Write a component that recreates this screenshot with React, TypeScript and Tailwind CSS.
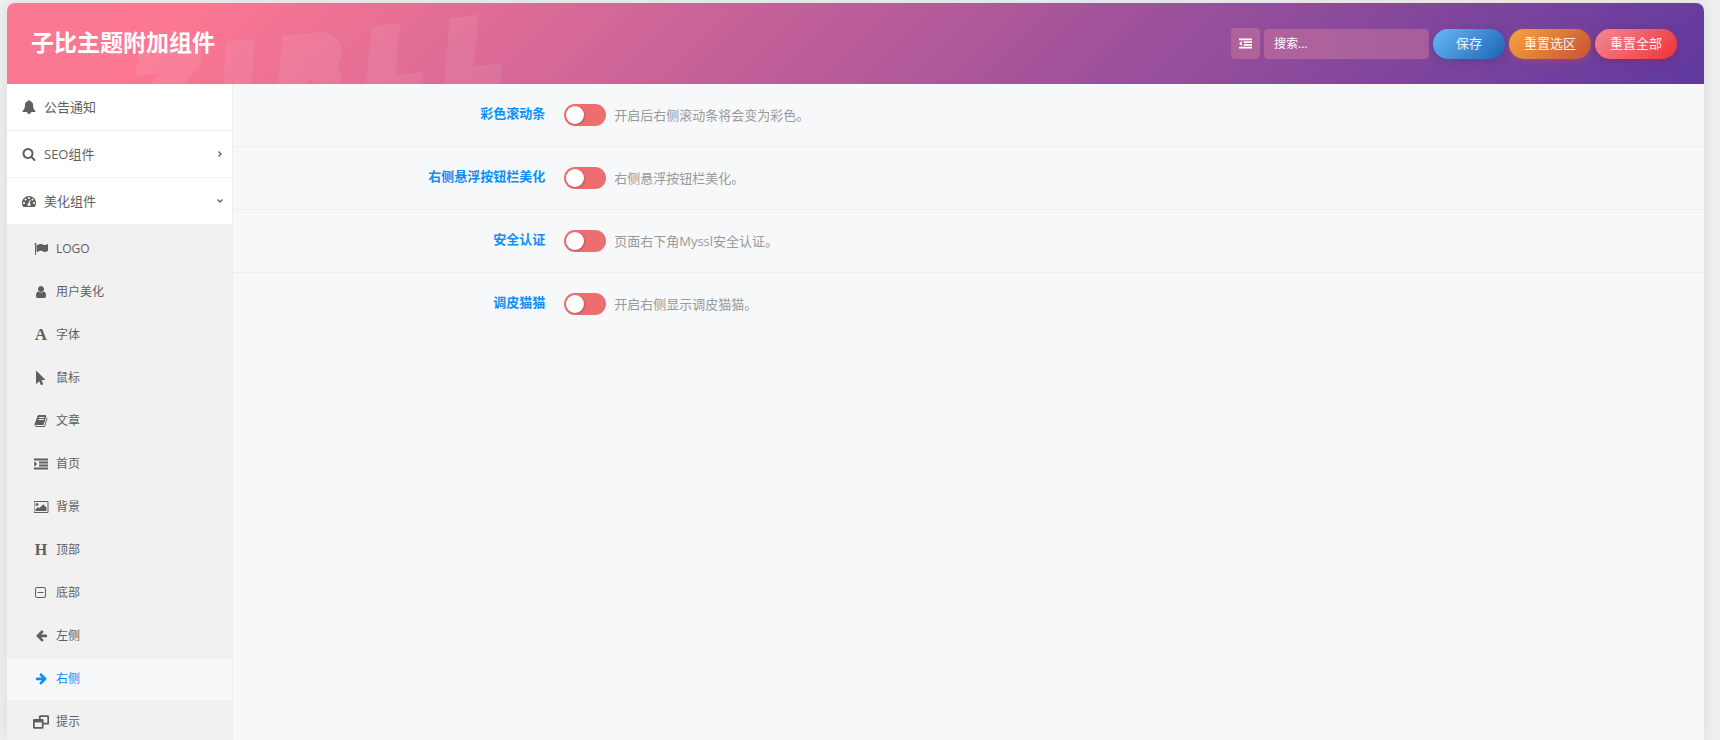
import React from "react";

const PATHS = {
  bell: "M912 1696q0-16-16-16-59 0-101.5-42.5t-42.5-101.5q0-16-16-16t-16 16q0 73 51.5 124.5t124.5 51.5q16 0 16-16zm816-288q0 52-38 90t-90 38h-448q0 106-75 181t-181 75-181-75-75-181h-448q-52 0-90-38t-38-90q50-42 91-88t85-119.5 74.5-158.5 50-206 19.5-260q0-152 117-282.5t307-158.5q-8-19-8-39 0-40 28-68t68-28 68 28 28 68q0 20-8 39 190 28 307 158.5t117 282.5q0 139 19.5 260t50 206 74.5 158.5 85 119.5 91 88z",
  search:
    "M1216 832q0-185-131.5-316.5t-316.5-131.5-316.5 131.5-131.5 316.5 131.5 316.5 316.5 131.5 316.5-131.5 131.5-316.5zm512 832q0 52-38 90t-90 38q-54 0-90-38l-343-342q-179 124-399 124-143 0-273.5-55.5t-225-150-150-225-55.5-273.5 55.5-273.5 150-225 225-150 273.5-55.5 273.5 55.5 225 150 150 225 55.5 273.5q0 220-124 399l343 343q37 37 37 90z",
  dashboard:
    "M384 1152q0-53-37.5-90.5t-90.5-37.5-90.5 37.5-37.5 90.5 37.5 90.5 90.5 37.5 90.5-37.5 37.5-90.5zm192-448q0-53-37.5-90.5t-90.5-37.5-90.5 37.5-37.5 90.5 37.5 90.5 90.5 37.5 90.5-37.5 37.5-90.5zm428 481l101-382q6-26-7.5-48.5t-38.5-29.5-48 6.5-30 39.5l-101 382q-60 5-107 43.5t-63 98.5q-20 77 20 146t117 89 146-20 89-117q16-60-6-117t-72-91zm660-33q0-53-37.5-90.5t-90.5-37.5-90.5 37.5-37.5 90.5 37.5 90.5 90.5 37.5 90.5-37.5 37.5-90.5zm-640-640q0-53-37.5-90.5t-90.5-37.5-90.5 37.5-37.5 90.5 37.5 90.5 90.5 37.5 90.5-37.5 37.5-90.5zm448 192q0-53-37.5-90.5t-90.5-37.5-90.5 37.5-37.5 90.5 37.5 90.5 90.5 37.5 90.5-37.5 37.5-90.5zm320 448q0 261-141 483-19 29-54 29h-1402q-35 0-54-29-141-221-141-483 0-182 71-348t191-286 286-191 348-71 348 71 286 191 191 286 71 348z",
  flag: "M320 256q0 72-64 110v1266q0 13-9.5 22.5t-22.5 9.5h-64q-13 0-22.5-9.5t-9.5-22.5v-1266q-64-38-64-110 0-53 37.5-90.5t90.5-37.5 90.5 37.5 37.5 90.5zm1472 64v763q0 25-12.5 38.5t-39.5 27.5q-215 116-369 116-61 0-123.5-22t-108.5-48-115.5-48-142.5-22q-192 0-464 146-17 9-33 9-26 0-45-19t-19-45v-742q0-32 31-55 21-14 79-43 236-120 421-120 107 0 200 29t219 88q38 19 88 19 54 0 117.5-21t110-47 88-47 54.5-21q26 0 45 19t19 45z",
  user: "M1536 1399q0 109-62.5 187t-150.5 78h-854q-88 0-150.5-78t-62.5-187q0-85 8.5-160.5t31.5-152 58.5-131 94-89 134.5-34.5q131 128 313 128t313-128q76 0 134.5 34.5t94 89 58.5 131 31.5 152 8.5 160.5zm-256-887q0 159-112.5 271.5t-271.5 112.5-271.5-112.5-112.5-271.5 112.5-271.5 271.5-112.5 271.5 112.5 112.5 271.5z",
  pointer:
    "M1389 1043q31 30 14 69-17 40-59 40h-382l201 476q10 25 0 49t-34 35l-177 75q-25 10-49 0t-35-34l-191-452-312 312q-19 19-45 19-12 0-24-5-40-17-40-59v-1504q0-42 40-59 12-5 24-5 27 0 45 19z",
  book: "M1703 478q40 57 18 129l-275 906q-19 64-76.5 107.5t-122.5 43.5h-923q-77 0-148.5-53.5t-99.5-131.5q-24-67-2-127 0-4 3-27t4-37q1-8-3-21.5t-3-19.5q2-11 8-21t16.5-23.5 16.5-23.5q23-38 45-91.5t30-91.5q3-10 .5-30t-.5-28q3-11 17-28t17-23q21-36 42-92t25-90q1-9-2.5-32t.5-28q4-13 22-30.5t22-22.5q19-26 42.5-84.5t27.5-96.5q1-8-3-25.5t-2-26.5q2-8 9-18t18-23 17-21q8-12 16.5-30.5t15-35 16-36 19.5-32 26.5-23.5 36-11.5 47.5 5.5l-1 3q38-9 51-9h761q74 0 114 56t18 130l-274 906q-36 119-71.5 153.5t-128.5 34.5h-869q-27 0-38 15-11 16-1 43 24 70 144 70h923q29 0 56-15.5t35-41.5l300-987q7-22 5-57 38 15 59 43zm-1064 2q-4 13 2 22.5t20 9.5h608q13 0 25.5-9.5t16.5-22.5l21-64q4-13-2-22.5t-20-9.5h-608q-13 0-25.5 9.5t-16.5 22.5zm-83 256q-4 13 2 22.5t20 9.5h608q13 0 25.5-9.5t16.5-22.5l21-64q4-13-2-22.5t-20-9.5h-608q-13 0-25.5 9.5t-16.5 22.5z",
  indent:
    "M384 896q0 14-9 23l-288 288q-9 9-23 9-13 0-22.5-9.5t-9.5-22.5v-576q0-13 9.5-22.5t22.5-9.5q14 0 23 9l288 288q9 9 9 23zM0 1344h1792v256h-1792zM640 960h1152v256h-1152zM640 576h1152v256h-1152zM0 192h1792v256h-1792z",
  outdent:
    "M384 608v576q0 13-9.5 22.5t-22.5 9.5q-14 0-23-9l-288-288q-9-9-9-23t9-23l288-288q9-9 23-9 13 0 22.5 9.5t9.5 22.5zM0 1344h1792v256h-1792zM640 960h1152v256h-1152zM640 576h1152v256h-1152zM0 192h1792v256h-1792z",
  arrowLeft:
    "M1664 896v128q0 53-32.5 90.5t-84.5 37.5h-704l293 294q38 36 38 90t-38 90l-75 76q-37 37-90 37-52 0-91-37l-651-652q-37-37-37-90 0-52 37-91l651-650q38-38 91-38 52 0 90 38l75 74q38 38 38 91t-38 91l-293 293h704q52 0 84.5 37.5t32.5 90.5z",
};

function Glyph({ name, className = "size-[14px]" }: { name: keyof typeof PATHS; className?: string }) {
  return (
    <svg viewBox="0 0 1792 1792" fill="currentColor" className={className} aria-hidden="true">
      <path d={PATHS[name]} />
    </svg>
  );
}

const PictureIcon = () => (
  <svg viewBox="0 0 1920 1792" fill="currentColor" className="h-[14px] w-[15px]" aria-hidden="true">
    <path d="M576 576q0 80-56 136t-136 56-136-56-56-136 56-136 136-56 136 56 56 136zm1024 384v448h-1408v-192l320-320 160 160 512-512zm96-704h-1600q-13 0-22.5 9.5t-9.5 22.5v1216q0 13 9.5 22.5t22.5 9.5h1600q13 0 22.5-9.5t9.5-22.5v-1216q0-13-9.5-22.5t-22.5-9.5zm160 32v1216q0 66-47 113t-113 47h-1600q-66 0-113-47t-47-113v-1216q0-66 47-113t113-47h1600q66 0 113 47t47 113z" />
  </svg>
);

const MinusSquareIcon = () => (
  <svg viewBox="0 0 14 14" fill="none" stroke="currentColor" className="size-[14px]" aria-hidden="true">
    <rect x="1.5" y="1.5" width="10" height="10" rx="1.5" />
    <path d="M3.5 6.5h6" />
  </svg>
);

const WindowsIcon = () => (
  <svg viewBox="0 0 16 14" fill="none" stroke="currentColor" className="h-[14px] w-[16px] shrink-0" aria-hidden="true">
    <rect x="6.8" y="1.2" width="8.4" height="7.4" rx="0.3" strokeWidth="1.8" />
    <rect x="0.9" y="5" width="8.8" height="7.8" rx="0.3" strokeWidth="1.8" fill="#f1f1f1" />
    <path d="M0.5 6h9.4" strokeWidth="2.8" />
  </svg>
);

const SUB_ITEMS: { label: string; icon: React.ReactNode; active?: boolean }[] = [
  { label: "LOGO", icon: <Glyph name="flag" /> },
  { label: "用户美化", icon: <Glyph name="user" /> },
  {
    label: "字体",
    icon: (
      <span aria-hidden="true" className="font-['Liberation_Serif',serif] text-[17px] font-bold">
        A
      </span>
    ),
  },
  { label: "鼠标", icon: <Glyph name="pointer" /> },
  { label: "文章", icon: <Glyph name="book" /> },
  { label: "首页", icon: <Glyph name="indent" /> },
  { label: "背景", icon: <PictureIcon /> },
  {
    label: "顶部",
    icon: (
      <span aria-hidden="true" className="font-['Liberation_Serif',serif] text-[16px] font-bold">
        H
      </span>
    ),
  },
  { label: "底部", icon: <MinusSquareIcon /> },
  { label: "左侧", icon: <Glyph name="arrowLeft" className="size-[13px]" /> },
  { label: "右侧", icon: <Glyph name="arrowLeft" className="size-[13px] -scale-x-100" />, active: true },
  { label: "提示", icon: <WindowsIcon /> },
];

const FIELDS = [
  { id: "scrollbar", title: "彩色滚动条", desc: "开启后右侧滚动条将会变为彩色。" },
  { id: "float-bar", title: "右侧悬浮按钮栏美化", desc: "右侧悬浮按钮栏美化。" },
  { id: "security", title: "安全认证", desc: "页面右下角Myssl安全认证。" },
  { id: "cat", title: "调皮猫猫", desc: "开启右侧显示调皮猫猫。" },
];

const Chevron = ({ open }: { open?: boolean }) => (
  <svg
    viewBox="0 0 8 8"
    fill="none"
    stroke="currentColor"
    strokeWidth="1.3"
    className={open ? "ml-auto size-2 rotate-90" : "ml-auto size-2"}
    aria-hidden="true"
  >
    <path d="M2.5 1.5L5 4L2.5 6.5" />
  </svg>
);

function TopItem({ icon, label, arrow }: { icon: React.ReactNode; label: string; arrow?: React.ReactNode }) {
  return (
    <a href="#" className="flex h-[47px] items-center border-b border-[#eeeeee] bg-white pr-2 pl-[14px] text-[13px] leading-5 text-[#5f5f5f]">
      <span className="flex w-4 justify-center">{icon}</span>
      <span className="ml-[7px]">{label}</span>
      {arrow}
    </a>
  );
}

function Header() {
  return (
    <header className="relative flex h-[81px] shrink-0 items-center justify-between overflow-hidden bg-[linear-gradient(135deg,#fb7893_0%,#fb7893_11%,#b45a99_53%,#60399f_100%)] pr-[27px] pl-6">
      <div
        aria-hidden="true"
        className="absolute top-[25px] left-[128px] flex -rotate-6 gap-6 font-['DejaVu_Sans',sans-serif] text-[86px] leading-[86px] font-bold text-white italic opacity-7 select-none [-webkit-text-stroke:12px_white]"
      >
        <span>Z</span>
        <span>I</span>
        <span>B</span>
        <span>L</span>
        <span>L</span>
      </div>
      <h1 className="relative pb-1 text-[23px] leading-8 font-bold text-white">子比主题附加组件</h1>
      <form className="relative flex items-center gap-1" onSubmit={(e) => e.preventDefault()}>
        <button type="button" aria-label="展开全部选项" className="flex h-[31px] w-[29px] items-center justify-center rounded bg-[#b0639b] text-white">
          <Glyph name="outdent" className="size-[13px]" />
        </button>
        <input
          type="text"
          aria-label="搜索"
          placeholder="搜索..."
          className="h-[30px] w-[165px] rounded bg-[linear-gradient(90deg,#b0639b,#a55f9b)] px-[10px] text-[12px] text-white outline-none placeholder:text-white"
        />
        <button className="h-[30px] w-[72px] rounded-full bg-[linear-gradient(135deg,#60b0f0_10%,#256cba_90%)] text-[13px] text-white/90 shadow-[0_2px_8px_rgba(50,50,140,0.4)]">
          保存
        </button>
        <button type="button" className="h-[30px] w-[82px] rounded-full bg-[linear-gradient(135deg,#f09c3c_10%,#cc5b36_90%)] text-[13px] text-white/90 shadow-[0_2px_8px_rgba(200,80,90,0.4)]">
          重置选区
        </button>
        <button type="button" className="h-[30px] w-[82px] rounded-full bg-[linear-gradient(135deg,#f58089_10%,#f03a42_90%)] text-[13px] text-white/90 shadow-[0_2px_8px_rgba(140,30,80,0.5)]">
          重置全部
        </button>
      </form>
    </header>
  );
}

export default function App() {
  return (
    <div className="flex h-screen flex-col overflow-hidden bg-[#eeeeee] pt-[3px] pr-4 pl-[7px] font-['Open_Sans','Noto_Sans_CJK_SC',sans-serif]">
      <div className="flex min-h-0 grow flex-col rounded-t-[8px] bg-[#f7f8fa] shadow-[0_0_14px_rgba(0,0,0,0.08)]">
        <div className="overflow-hidden rounded-t-[8px]">
          <Header />
        </div>
        <div className="flex min-h-0 grow">
          <nav className="w-[226px] shrink-0 border-r border-[#eeeeee]">
            <TopItem icon={<Glyph name="bell" />} label="公告通知" />
            <TopItem icon={<Glyph name="search" />} label="SEO组件" arrow={<Chevron />} />
            <TopItem icon={<Glyph name="dashboard" />} label="美化组件" arrow={<Chevron open />} />
            <ul className="bg-[#f1f1f1] pt-[3px]">
              {SUB_ITEMS.map((item) => (
                <li key={item.label}>
                  <a
                    href="#"
                    aria-current={item.active ? "page" : undefined}
                    className={
                      "flex h-[43px] items-center border-b border-[#eeeeee] pl-[26px] text-[12px] leading-5 " +
                      (item.active ? "bg-[#f7f8fa] text-[#0b8ffb]" : "text-[#5f5f5f]")
                    }
                  >
                    <span className="flex w-4 justify-center">{item.icon}</span>
                    <span className="ml-[7px]">{item.label}</span>
                  </a>
                </li>
              ))}
            </ul>
          </nav>
          <main className="grow">
            {FIELDS.map((f) => (
              <div key={f.id} className="flex gap-[19px] border-b border-[#eeeeee] px-[30px] py-5 text-[13px] last:border-b-0">
                <label htmlFor={f.id} className="w-1/5 text-right leading-[18px] font-bold text-[#0b8ffb]">
                  {f.title}
                </label>
                <div className="flex items-center gap-2">
                  <input
                    id={f.id}
                    type="checkbox"
                    role="switch"
                    className="h-[22px] w-[42px] appearance-none rounded-full bg-[#ee6e70] p-[2px] before:block before:size-[18px] before:rounded-full before:bg-white before:shadow-[1px_1px_2px_rgba(0,0,0,0.2)] checked:bg-[#4caf50] checked:before:translate-x-5"
                  />
                  <span className="leading-[22px] text-[#999999]">{f.desc}</span>
                </div>
              </div>
            ))}
          </main>
        </div>
      </div>
    </div>
  );
}
